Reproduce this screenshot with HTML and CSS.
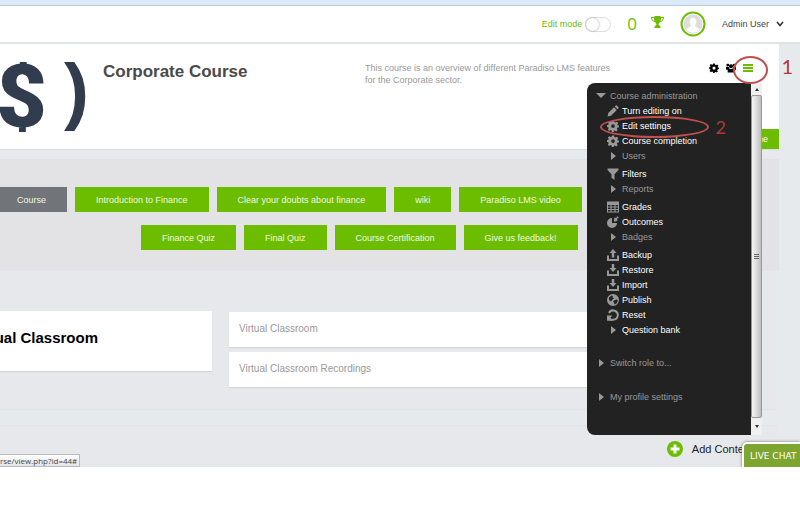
FILE: index.html
```html
<!DOCTYPE html>
<html lang="en">
<head>
<meta charset="utf-8">
<title>Corporate Course</title>
<link rel="stylesheet" href="styles.css">
</head>
<body>
<svg class="defs" aria-hidden="true">
  <symbol id="gear" viewBox="0 0 24 24"><path fill-rule="evenodd" d="M10 1h4l.7 3.2 2 .9 2.8-1.8 2.9 2.9-1.8 2.8.8 2L24 11v3.6l-3.500.8-.9 2 1.800 2.800-2.900 2.600-2.700-1.700-2.100.9L13.500 24h-3.700l-.7-2.900-2.100-.9-2.700 1.700-2.700-2.600 1.700-2.900-.8-2L0 13.800V10.500l2.700-.8.8-2L1.700 5.100 4.500 2.400 7.300 4.200l2-.8zM12 8.500a3.700 3.700 0 1 0 0 7.400A3.700 3.700 0 1 0 12 8.500z"/></symbol>
  <symbol id="pencil" viewBox="0 0 24 24"><path d="M1 23l1.500-7L14 4.500l5.500 5.500L8 21.500zM15.500 3l2-2q1-1 2.200 0l3.300 3.300q1 1.200 0 2.200l-2 2z"/></symbol>
  <symbol id="filter" viewBox="0 0 24 24"><path d="M1 1h22v3l-8 8.500V24l-6-4.500v-7L1 4z"/></symbol>
  <symbol id="table" viewBox="0 0 24 24"><path fill-rule="evenodd" d="M0 1h24v22H0zM2 8v3h5V8zm7 0v3h6V8zm8 0v3h5V8zM2 13v3h5v-3zm7 0v3h6v-3zm8 0v3h5v-3zM2 18v3h5v-3zm7 0v3h6v-3zm8 0v3h5v-3z"/></symbol>
  <symbol id="pie" viewBox="0 0 24 24"><path d="M10 4v10h10A10 10 0 1 1 10 4zM14 8l1-5 4 1 1-4 4 4-4 1 1 4-4 2h-3z"/></symbol>
  <symbol id="upload" viewBox="0 0 24 24"><path d="M0 13h4v7h16v-7h4v11H0zM12 0l7 8h-4.500v9h-5V8H5z"/></symbol>
  <symbol id="download" viewBox="0 0 24 24"><path d="M0 13h4v7h16v-7h4v11H0zM9.500 0h5v8H19l-7 8-7-8h4.500z"/></symbol>
  <symbol id="globe" viewBox="0 0 24 24"><path fill-rule="evenodd" d="M12 0a12 12 0 1 0 0 24 12 12 0 0 0 0-24zM4 7l5-4 3 1-1 3 3 2-4 3-2 3-4-3zM14 13l5-2 3 2-3 6-4 2-1-4-2-2z"/></symbol>
  <symbol id="reset" viewBox="0 0 24 24"><path d="M4 8a9.300 9.300 0 1 1 8 13.500H6" fill="none" stroke="currentColor" stroke-width="4"/><path d="M0 23.500V13h11l-4 4 4 6.500z"/></symbol>
</svg>

<div class="page">
  <div class="chrome"></div>
  <header class="topbar">
    <label class="edit" for="editmode">Edit mode</label>
    <input class="toggle" type="checkbox" id="editmode">
    <span class="points">0</span>
    <svg class="trophy" viewBox="0 0 26 24" aria-hidden="true"><path d="M7 0h12v2h7c0 6-3 9-8 10-1 2-3 3-3 5 0 2 4 2 4 5v2H7v-2c0-3 4-3 4-5 0-2-2-3-3-5C3 11 0 8 0 2h7zM2 4c0 3 2 5 5 6-1-2-1-4-1-6zM24 4h-4c0 2 0 4-1 6 3-1 5-3 5-6z" fill-rule="evenodd"/></svg>
    <svg class="avatar" viewBox="0 0 26 26" role="img" aria-label="Profile picture"><circle cx="13" cy="13" r="11.500" fill="#fff" stroke="#6cbd00" stroke-width="2"/><circle cx="13" cy="13" r="9.500" fill="#dedede"/><path d="M13 6.500a3.700 4.500 0 0 1 2 8q0 1.500 2.500 2.200 2 .8 2.300 2A9.500 9.500 0 0 1 6.200 18.700q.3-1.200 2.300-2Q11 16 11 14.500a3.700 4.500 0 0 1 2-8z" fill="#fff"/></svg>
    <button class="user" type="button">Admin User
      <svg class="chevron" viewBox="0 0 8 6" aria-hidden="true"><path d="M1 1l3 3.500L7 1" fill="none" stroke="#333" stroke-width="1.600"/></svg>
    </button>
  </header>

  <main class="content">
    <section class="course">
      <div class="logo" aria-hidden="true"><span class="dollar">$</span><span class="paren">)</span></div>
      <h1>Corporate Course</h1>
      <p class="summary">This course is an overview of different Paradiso LMS features<br>for the Corporate sector.</p>
      <div class="tools">
        <button type="button" aria-label="Settings"><svg viewBox="0 0 24 24"><use href="#gear"/></svg></button>
        <button type="button" aria-label="Participants"><svg viewBox="0 0 24 22"><circle cx="4.500" cy="4" r="3.500"/><circle cx="19.500" cy="4" r="3.500"/><circle cx="12" cy="7" r="4.800"/><path d="M0 8h6l2 4-3 3H0zM24 8h-6l-2 4 3 3h5zM4 16q0-4 4-4 4 3 8 0 4 0 4 4v6H4z"/></svg></button>
        <button class="burger" type="button" aria-label="Menu"><svg viewBox="0 0 10 10"><path d="M0 1h10v2H0zM0 4h10v2H0zM0 7h10v2H0z"/></svg></button>
      </div>
      <a class="more" href="#">ne</a>
    </section>

    <nav class="modules" aria-label="Course sections">
      <div class="row first">
        <a class="btn current" href="#">Course</a>
        <a class="btn" href="#">Introduction to Finance</a>
        <a class="btn" href="#">Clear your doubts about finance</a>
        <a class="btn" href="#">wiki</a>
        <a class="btn" href="#">Paradiso LMS video</a>
      </div>
      <div class="row second">
        <a class="btn" href="#">Finance Quiz</a>
        <a class="btn" href="#">Final Quiz</a>
        <a class="btn" href="#">Course Certification</a>
        <a class="btn" href="#">Give us feedback!</a>
      </div>
    </nav>

    <section class="topic">
      <div class="card title"><h2>ual Classroom</h2></div>
      <div class="activities">
        <a class="card" href="#">Virtual Classroom</a>
        <a class="card" href="#">Virtual Classroom Recordings</a>
      </div>
    </section>

    <section class="topic add">
      <button type="button"><svg viewBox="0 0 16 16" aria-hidden="true"><circle cx="8" cy="8" r="8" fill="#6cbd00"/><path d="M8 3.500v9M3.500 8h9" stroke="#fff" stroke-width="3"/></svg>Add Content</button>
    </section>
  </main>

  <div class="status">rse/view.php?id=44#</div>
  <button class="chat" type="button">LIVE CHAT</button>

  <aside class="menu">
    <div class="panel">
      <button class="head" type="button"><i class="down"></i>Course administration</button>
      <ul>
        <li><a href="#"><svg><use href="#pencil"/></svg>Turn editing on</a></li>
        <li><a href="#"><svg><use href="#gear"/></svg>Edit settings</a></li>
        <li><a href="#"><svg><use href="#gear"/></svg>Course completion</a></li>
        <li><button type="button"><i class="right"></i>Users</button></li>
      </ul>
      <ul>
        <li><a href="#"><svg><use href="#filter"/></svg>Filters</a></li>
        <li><button type="button"><i class="right"></i>Reports</button></li>
      </ul>
      <ul>
        <li><a href="#"><svg><use href="#table"/></svg>Grades</a></li>
        <li><a href="#"><svg><use href="#pie"/></svg>Outcomes</a></li>
        <li><button type="button"><i class="right"></i>Badges</button></li>
      </ul>
      <ul>
        <li><a href="#"><svg><use href="#upload"/></svg>Backup</a></li>
        <li><a href="#"><svg><use href="#download"/></svg>Restore</a></li>
        <li><a href="#"><svg><use href="#download"/></svg>Import</a></li>
        <li><a href="#"><svg><use href="#globe"/></svg>Publish</a></li>
        <li><a href="#"><svg><use href="#reset"/></svg>Reset</a></li>
        <li><a href="#"><i class="right"></i>Question bank</a></li>
      </ul>
      <button class="head role" type="button"><i class="right"></i>Switch role to...</button>
      <button class="head profile" type="button"><i class="right"></i>My profile settings</button>
    </div>
    <div class="scroll" aria-hidden="true">
      <div class="arrow up"></div>
      <div class="thumb"><span></span></div>
      <div class="arrow dn"></div>
    </div>
  </aside>

  <div class="ring one"></div>
  <div class="ring two"></div>
  <span class="step s1">1</span>
  <span class="step s2">2</span>
</div>
</body>
</html>
```
FILE: styles.css
```css
* { box-sizing: border-box; }

body {
  margin: 0;
  background: #fff;
  font: 9px/12px "Liberation Sans", Arial, sans-serif;
  color: #444;
}

h1, h2, p, ul { margin: 0; padding: 0; }
ul { list-style: none; }
a { color: inherit; text-decoration: none; }
button {
  margin: 0;
  padding: 0;
  border: 0;
  background: none;
  font: inherit;
  color: inherit;
}
svg { fill: currentColor; flex: none; }
.defs { display: none; }

.page { position: relative; overflow: hidden; }

.chrome {
  height: 6px;
  background: #dce9f9;
  border-bottom: 1px solid #b9cbe1;
}

/* Top bar */
.topbar {
  display: flex;
  justify-content: flex-end;
  align-items: center;
  height: 38px;
  padding-right: 16px;
  border-bottom: 2px solid #dfe3e6;
}
.edit { color: #6cbd00; margin-right: 3px; }
.toggle {
  appearance: none;
  width: 26px;
  height: 15px;
  margin: 0 16px 0 0;
  border: 1px solid #ddd;
  border-radius: 8px;
  background: #fff;
}
.toggle::before {
  content: "";
  display: block;
  width: 13px;
  height: 13px;
  border-radius: 50%;
  background: #fff;
  box-shadow: 0 0 2px #888;
}
.points {
  margin-right: 14px;
  font: 17px/20px "Open Sans", sans-serif;
  color: #6cbd00;
}
.trophy { width: 13px; height: 12px; margin: 0 16px 4px 0; color: #6cbd00; }
.avatar { width: 26px; height: 26px; margin-right: 16px; }
.user { display: flex; align-items: center; gap: 7px; }
.chevron { width: 8px; height: 6px; }

/* Page body */
.content { background: #e6eaed; }

.course {
  position: relative;
  display: flex;
  align-items: flex-start;
  height: 106px;
  margin-right: 21px;
  padding-top: 18px;
  background: #fff;
  border-bottom: 1px solid #d9dde0;
}
.logo {
  display: flex;
  flex: none;
  justify-content: flex-end;
  width: 103px;
  height: 70px;
  overflow: hidden;
  color: #313d4f;
}
.dollar { margin-right: 17px; font: 900 88px/70px Roboto, sans-serif; }
.paren { margin-right: 14px; font: bold 75px/56px "Liberation Sans", Arial, sans-serif; }
.course h1 {
  width: 262px;
  font-size: 17px;
  line-height: 20px;
  color: #4a4a4a;
}
.summary { color: #999; }
.tools {
  display: flex;
  align-items: center;
  gap: 7px;
  height: 12px;
  margin: 0 26px 0 auto;
  color: #000;
}
.tools button, .tools svg { display: block; width: 10px; height: 10px; }
.tools .burger { color: #6cbd00; }
.more {
  position: absolute;
  right: 0;
  bottom: 0;
  width: 50px;
  padding: 4px 11px 4px 0;
  background: #6cbd00;
  color: #fff;
  text-align: right;
}

.modules {
  height: 112px;
  margin: 9px 21px 0 0;
  padding-top: 28px;
  background: #e3e3e5;
}
.row { display: flex; gap: 8px; margin-bottom: 13px; }
.second { padding-left: 141px; }
.btn {
  padding: 7px 21px 6px;
  background: #6cbd00;
  color: #f0f8e0;
  white-space: nowrap;
}
.btn.current { padding-left: 17px; background: #71757a; }

.topic {
  display: flex;
  align-items: flex-start;
  gap: 17px;
  height: 139px;
  margin-right: 23px;
  padding: 40px 38px 0 0;
  background: #e7e8ec;
  border-bottom: 1px solid #e1e4e7;
}
.card { background: #fff; box-shadow: 0 1px 1px #d4d6d9; }
.title { width: 212px; height: 60px; padding-top: 17px; }
.title h2 {
  display: flex;
  justify-content: flex-end;
  width: 98px;
  font-size: 15px;
  line-height: 20px;
  color: #000;
  white-space: nowrap;
}
.activities { display: grid; flex: 1; gap: 5px; padding-top: 1px; }
.activities .card {
  padding: 11px 10px 12px;
  font-size: 10px;
  color: #999;
}
.topic.add {
  justify-content: flex-end;
  height: 42px;
  margin-top: 15px;
  padding: 15px 24px 0 0;
  border-top: 1px solid #e1e4e7;
  border-bottom: 0;
}
.add button {
  display: flex;
  align-items: center;
  gap: 9px;
  font-size: 11px;
  line-height: 16px;
  color: #222;
}
.add svg { width: 16px; height: 16px; }

/* Overlays */
.status {
  position: absolute;
  left: 0;
  bottom: 0;
  padding-right: 2px;
  border: 1px solid #bbb;
  border-left: 0;
  background: linear-gradient(#fff, #e4e5ea);
  font: 8px/11px "Open Sans", sans-serif;
  white-space: nowrap;
}
.chat {
  position: absolute;
  right: 0;
  bottom: 0;
  width: 58px;
  height: 25px;
  padding-left: 6px;
  border: solid #fff;
  border-width: 2px 0 0 2px;
  border-radius: 5px 0 0;
  background: #7da52f;
  box-shadow: 0 0 3px #666;
  font: 9px/12px "DejaVu Sans", sans-serif;
  color: #fff;
  text-align: left;
  white-space: nowrap;
}

.menu {
  position: absolute;
  top: 83px;
  right: 38px;
  display: flex;
}
.panel {
  width: 164px;
  padding: 5px 0 31px;
  border-radius: 8px 0 0 8px;
  background: #222;
  color: #fff;
}
.panel a, .panel button {
  display: flex;
  align-items: center;
  height: 15px;
  white-space: nowrap;
}
.panel button { color: #999; }
.panel ul { margin-bottom: 3px; padding-left: 20px; }
.panel svg { width: 12px; height: 12px; margin-right: 3px; color: #999; }
.panel .head { padding-left: 9px; }
.panel .role { margin-top: 18px; padding-left: 8px; }
.panel .profile { margin-top: 19px; padding-left: 8px; }
.panel i { border: solid transparent; }
.panel .right {
  margin: 0 6px 0 4px;
  border-width: 4px 0 4px 5px;
  border-left-color: #999;
}
.panel .down {
  margin-right: 4px;
  border-width: 5px 5px 0;
  border-top-color: #999;
}

.scroll {
  display: flex;
  flex-direction: column;
  width: 11px;
  background: #f0f0f0;
}
.arrow { display: grid; place-items: center; height: 12px; }
.arrow.dn { height: 17px; }
.arrow::before { content: ""; border: solid transparent; }
.up::before { border-width: 0 2px 3px; border-bottom-color: #333; }
.dn::before { border-width: 3px 2px 0; border-top-color: #333; }
.thumb {
  display: grid;
  place-items: center;
  flex: 1;
  border: 1px solid #999;
  border-radius: 2px;
  background: linear-gradient(90deg, #f4f4f4, #dcdcdc 50%, #bdbdbd);
}
.thumb span {
  width: 5px;
  height: 5px;
  border: solid #666;
  border-width: 1px 0;
  background: linear-gradient(transparent 1px, #666 1px 2px, transparent 2px);
}

/* Walk-through markers */
.ring {
  position: absolute;
  border: 2px solid #c0504d;
  border-radius: 50%;
}
.ring.one { top: 56px; right: 32px; width: 35px; height: 28px; }
.ring.two { top: 116px; right: 91px; width: 109px; height: 22px; }
.step {
  position: absolute;
  font: 18px/20px Lato, sans-serif;
  color: #a93a38;
}
.s1 { top: 56px; right: 7px; font-size: 20px; }
.s2 { top: 117px; right: 74px; }
```
